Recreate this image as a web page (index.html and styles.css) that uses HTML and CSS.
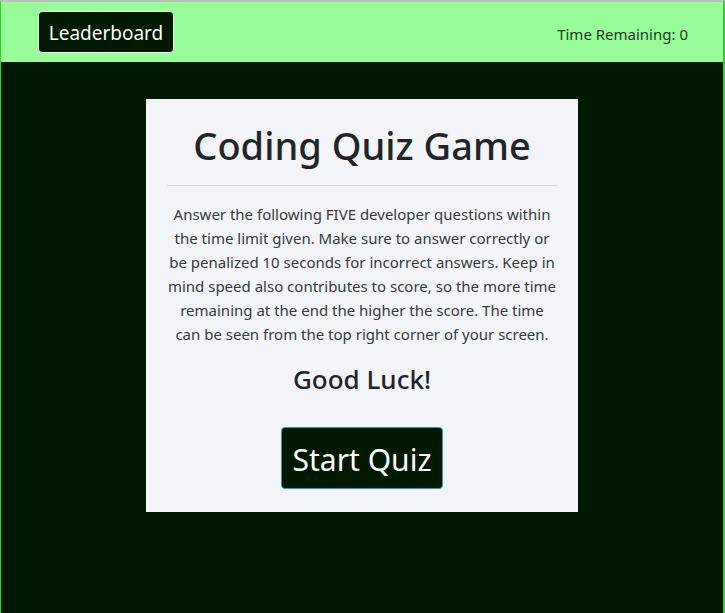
FILE: index.html
```html
<!DOCTYPE html>
<html lang="en">
<head>
<meta charset="utf-8">
<title>Coding Quiz Game</title>
<link rel="stylesheet" href="styles.css">
</head>
<body>
<div class="page">
  <header class="navbar">
    <button class="btn-leader">Leaderboard</button>
    <span class="timer">Time Remaining: 0</span>
  </header>
  <main class="main">
    <section class="card">
      <h1 class="title">Coding Quiz Game</h1>
      <hr class="divider">
      <p class="intro">Answer the following FIVE developer questions within the time limit given. Make sure to answer correctly or be penalized 10 seconds for incorrect answers. Keep in mind speed also contributes to score, so the more time remaining at the end the higher the score. The time can be seen from the top right corner of your screen.</p>
      <h3 class="luck">Good Luck!</h3>
      <button class="btn-start">Start Quiz</button>
    </section>
  </main>
</div>
</body>
</html>
```
FILE: styles.css
```css
* { box-sizing: border-box; }
html, body { margin: 0; padding: 0; height: 100%; }
body {
  font-family: "Noto Sans", "Open Sans", sans-serif;
  background: #001900;
  color: #212529;
}
.page {
  min-height: 613px;
  border-top: 2px solid #b9c2b9;
  border-left: 1px solid #2fd22f;
  border-right: 2px solid #2fd22f;
  background: #001900;
  display: flex;
  flex-direction: column;
}
.navbar {
  height: 60px;
  background: #98fd98;
  display: flex;
  align-items: center;
  justify-content: space-between;
  padding: 0 35px 0 37px;
}
.btn-leader {
  font-family: inherit;
  font-size: 19px;
  color: #ffffff;
  background: #001900;
  border: 1px solid #e8ffe8;
  border-radius: 4px;
  height: 42px;
  width: 136px;
  padding: 2px 0 0;
}
.timer {
  font-size: 15px;
  color: #1f3a1f;
  margin-top: 4px;
}
.main {
  flex: 1;
  display: flex;
  justify-content: center;
  align-items: flex-start;
  padding-top: 37px;
}
.card {
  width: 432px;
  background: #f2f4f8;
  padding: 24px 21px 23px;
  text-align: center;
}
.title {
  margin: 0 0 16px;
  font-size: 38px;
  font-weight: 500;
  line-height: 1.2;
}
.divider {
  margin: 0 0 16px;
  border: 0;
  border-top: 1px solid #d8dadd;
}
.intro {
  margin: 0 0 16px;
  font-size: 15px;
  line-height: 24px;
  color: #343a40;
}
.luck {
  margin: 0 0 31px;
  font-size: 26px;
  font-weight: 500;
  line-height: 34px;
}
.btn-start {
  font-family: inherit;
  font-size: 30px;
  color: #ffffff;
  background: #001900;
  border: 1px solid #2f8fd6;
  border-radius: 4px;
  height: 62px;
  padding: 4px 11px 0;
}
```
